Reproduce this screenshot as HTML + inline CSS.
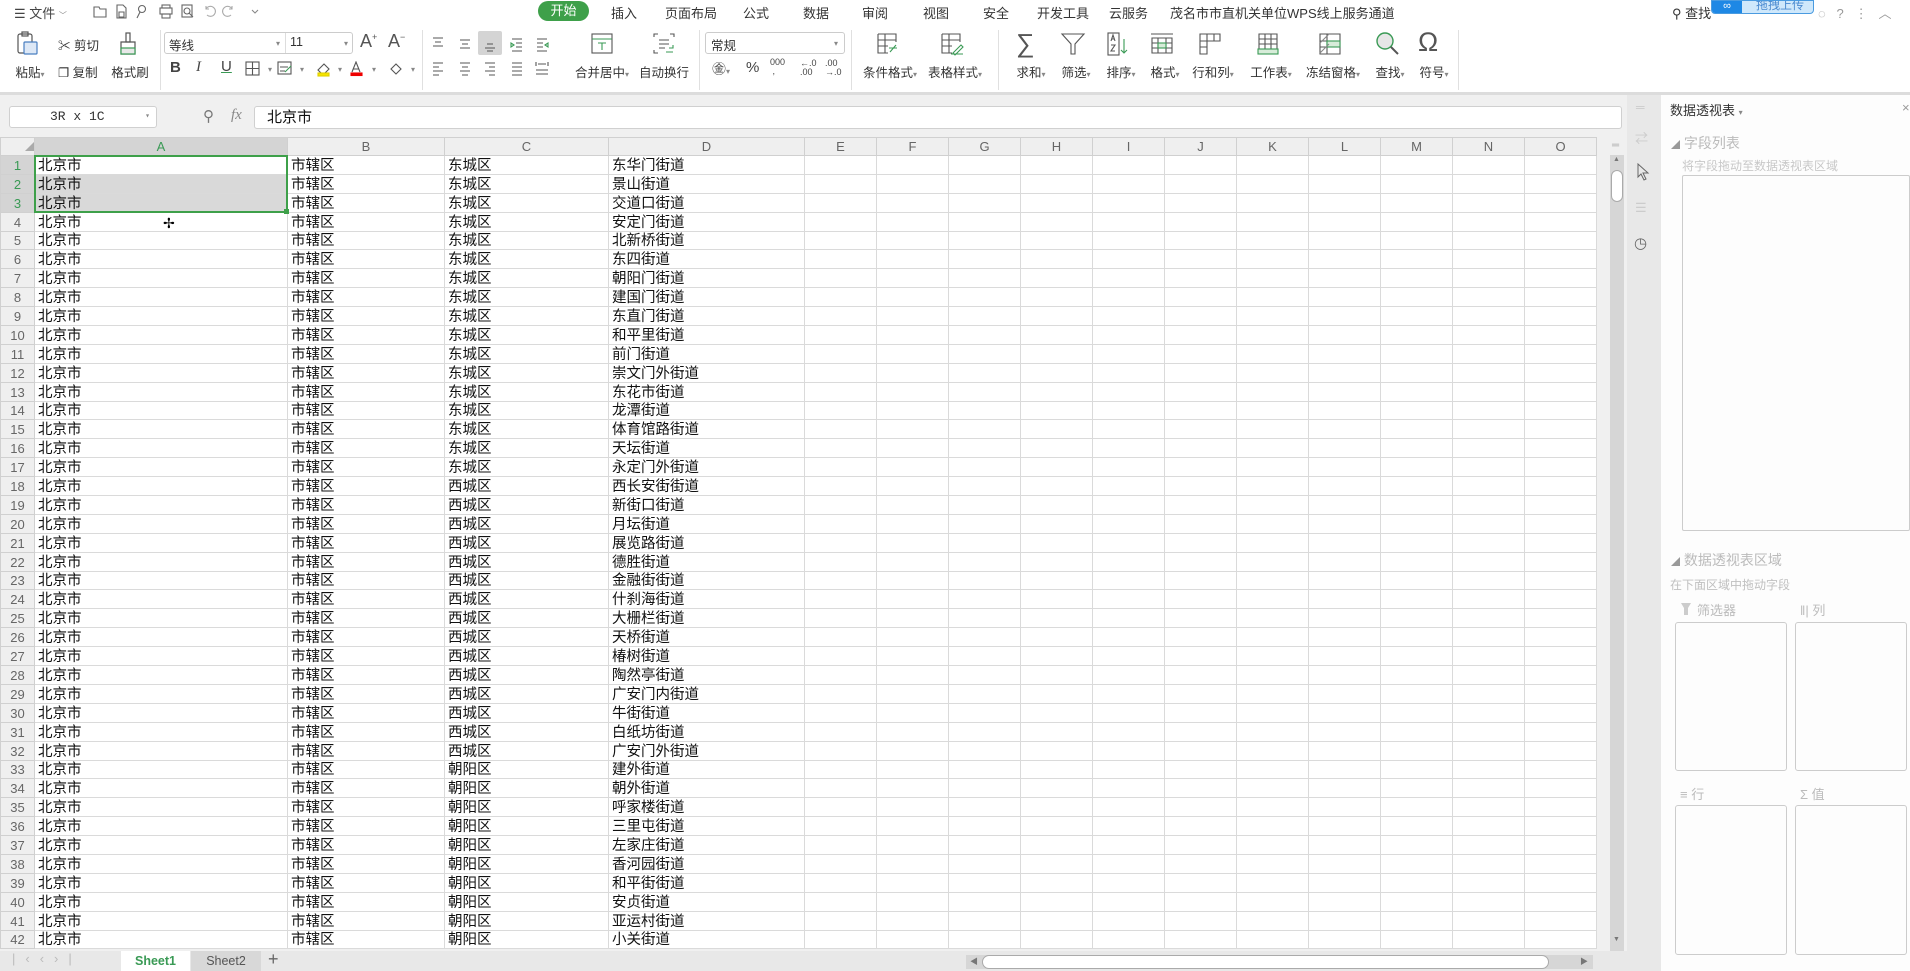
<!DOCTYPE html>
<html><head><meta charset="utf-8">
<style>
*{box-sizing:border-box;margin:0;padding:0}
body{width:1910px;height:971px;overflow:hidden;position:relative;background:#f0f0f0;font-family:"Liberation Sans","Noto Sans CJK SC",sans-serif;color:#333;font-size:13px}
.a{position:absolute}
.tab{position:absolute;top:3px;font-size:13px;color:#333;white-space:nowrap}
.lbl{position:absolute;top:62px;font-size:12.5px;color:#333;white-space:nowrap;transform:translateX(-50%)}
.ic{position:absolute;top:31px;width:26px;height:26px;transform:translateX(-50%)}
.div{position:absolute;top:30px;width:1px;height:60px;background:#e0e0e0}
.dd{font-size:8px;color:#888}
table{border-collapse:collapse;table-layout:fixed;position:absolute;left:0;top:137px}
tr{height:18.9px}
td{border:1px solid #dadada;height:18.9px;padding:0 0 0 3px;font-size:14.5px;line-height:16px;white-space:nowrap;overflow:hidden;color:#111;background:#fff;vertical-align:bottom}
td.r{background:#efefef;color:#666;text-align:center;padding:0;font-size:13px;border-color:#d0d0d0}
tr.h{height:18px}
tr.h td{background:#efefef;color:#666;text-align:center;padding:0;font-size:13px;height:18px;border-color:#d0d0d0;vertical-align:middle}
.pt{font-size:13px;color:#bbb}
</style></head><body>
<div class="a" style="left:0;top:0;width:1910px;height:93px;background:#fff"></div>
<div class="tab" style="left:14px;color:#444">☰ 文件 <span class="dd">﹀</span></div>
<svg class="a" style="left:92px;top:3px" width="190" height="16" fill="none" stroke="#666" stroke-width="1.1">
<path d="M2 4h5l1 2h6v8H2z"/><path d="M25 2h6l3 3v10h-9z M27 9h5v5h-5z"/><circle cx="50" cy="6" r="3.5"/><path d="M48 9l-3 6"/>
<rect x="68" y="5" width="12" height="6"/><rect x="70" y="2" width="8" height="3"/><rect x="70" y="11" width="8" height="4"/>
<rect x="90" y="2" width="10" height="12"/><circle cx="95" cy="8" r="3"/><path d="M97 10l4 4"/>
<path d="M114 6a5 5 0 1 1 1 6M114 3v3h3" stroke="#aaa"/><path d="M140 6a5 5 0 1 0 -1 6M140 3v3h-3" stroke="#aaa"/><path d="M160 7l3 3 3-3" stroke="#888"/></svg>
<div class="a" style="left:538px;top:1px;width:51px;height:20px;border-radius:10px;background:#3ea04a;color:#fff;text-align:center;line-height:20px;font-size:13px">开始</div>
<div class="tab" style="left:611px">插入</div>
<div class="tab" style="left:665px">页面布局</div>
<div class="tab" style="left:743px">公式</div>
<div class="tab" style="left:803px">数据</div>
<div class="tab" style="left:862px">审阅</div>
<div class="tab" style="left:923px">视图</div>
<div class="tab" style="left:983px">安全</div>
<div class="tab" style="left:1037px">开发工具</div>
<div class="tab" style="left:1109px">云服务</div>
<div class="tab" style="left:1170px">茂名市市直机关单位WPS线上服务通道</div>
<div class="tab" style="left:1672px">⚲ 查找</div>
<div class="a" style="left:1711px;top:0;width:103px;height:14px;border-radius:0 0 4px 4px;background:#cfe8fb;border:1px solid #4a9be0;overflow:hidden"><div style="position:absolute;left:0;top:0;width:30px;height:14px;background:#1e88e5;color:#fff;font-size:11px;text-align:center;line-height:10px">∞</div><div style="position:absolute;left:44px;top:-5px;font-size:12px;color:#4a8ad0">拖拽上传</div></div>
<div class="tab" style="left:1818px;color:#999">◌&nbsp;&nbsp; ?&nbsp;&nbsp; ⋮&nbsp;&nbsp; ︿</div>

<div class="div" style="left:160px"></div><div class="div" style="left:422px"></div><div class="div" style="left:699px"></div><div class="div" style="left:851px"></div><div class="div" style="left:998px"></div><div class="div" style="left:1458px"></div>
<svg class="ic" style="left:27px" viewBox="0 0 26 26" fill="none" stroke="#555" stroke-width="1.2"><rect x="4" y="3" width="14" height="19" rx="2"/><rect x="8" y="1" width="6" height="4"/><rect x="10" y="11" width="13" height="12" rx="1" fill="#dde8f6" stroke="#4a7fc0"/></svg>
<div class="lbl" style="left:30px">粘贴<span class="dd">▾</span></div>
<div class="a" style="left:58px;top:35px;font-size:12.5px">✂ 剪切</div>
<div class="a" style="left:58px;top:62px;font-size:12.5px">❐ 复制</div>
<svg class="ic" style="left:128px" viewBox="0 0 26 26" fill="none" stroke="#555" stroke-width="1.2"><rect x="11" y="2" width="4" height="9"/><path d="M6 11h14v12H6z"/><rect x="6" y="17" width="14" height="6" fill="#e8e8e8" stroke="#3a9a55"/></svg>
<div class="lbl" style="left:130px">格式刷</div>
<div class="a" style="left:164px;top:32px;width:189px;height:22px;border:1px solid #ccc;border-radius:3px"></div>
<div class="a" style="left:285px;top:33px;width:1px;height:20px;background:#ddd"></div>
<div class="a" style="left:169px;top:35px;font-size:12.5px">等线</div><div class="a dd" style="left:276px;top:39px">▾</div>
<div class="a" style="left:290px;top:35px;font-size:12.5px">11</div><div class="a dd" style="left:344px;top:39px">▾</div>
<div class="a" style="left:360px;top:31px;font-size:18px;color:#555">A<sup style="font-size:9px">+</sup></div>
<div class="a" style="left:388px;top:31px;font-size:18px;color:#555">A<sup style="font-size:9px">−</sup></div>
<div class="a" style="left:170px;top:59px;font-size:15px;font-weight:bold;color:#444">B</div>
<div class="a" style="left:196px;top:59px;font-size:15px;font-style:italic;color:#444;font-family:'Liberation Serif'">I</div>
<div class="a" style="left:221px;top:58px;font-size:15px;color:#444;text-decoration:underline;text-decoration-color:#3a9a55">U</div>
<svg class="a" style="left:245px;top:61px" width="170" height="16" fill="none" stroke="#555" stroke-width="1.1"><rect x="1" y="1" width="13" height="13"/><path d="M7.5 1v13M1 7.5h13"/><rect x="33" y="1" width="13" height="12"/><path d="M35 6h8M35 10h5"/><path d="M40 11l6-6" stroke="#3a9a55"/><path d="M73 9l6-6 5 5-6 6z"/><rect x="73" y="12" width="11" height="3" fill="#f5e400" stroke="#e0d000"/><path d="M107 11l4-10 4 10M108 8h6"/><rect x="106" y="12" width="11" height="2.5" fill="#e00" stroke="#e00"/><path d="M146 8l5-5 5 5-5 5z"/></svg>
<div class="a dd" style="left:268px;top:65px">▾</div><div class="a dd" style="left:300px;top:65px">▾</div><div class="a dd" style="left:338px;top:65px">▾</div><div class="a dd" style="left:372px;top:65px">▾</div><div class="a dd" style="left:411px;top:65px">▾</div>
<div class="a" style="left:478px;top:31px;width:24px;height:24px;background:#d4d4d4;border-radius:2px"></div>
<svg class="a" style="left:430px;top:36px" width="125" height="42" fill="none" stroke="#555" stroke-width="1.1"><path d="M3 2h10M5 6h6M3 10h10"/><path d="M30 4h10M32 8h6M30 12h10"/><path d="M57 8h6M55 12h10M57 15h6"/><path d="M82 3h10M86 7h6M86 11h6M82 15h10"/><path d="M84 9l-3-2v4z" stroke="#3a9a55"/><path d="M107 3h10M107 7h6M107 11h6M107 15h10"/><path d="M115 9l3-2v4z" stroke="#3a9a55"/>
<path d="M3 27h10M3 31h6M3 35h10M3 39h6"/><path d="M30 27h10M32 31h6M30 35h10M32 39h6"/><path d="M55 27h10M59 31h6M55 35h10M59 39h6"/><path d="M82 27h10M82 31h10M82 35h10M82 39h10"/><path d="M106 26v4M118 26v4M108 28h8M106 34h12M106 38h12"/></svg>
<svg class="ic" style="left:602px" viewBox="0 0 26 26" fill="none" stroke="#555" stroke-width="1.1"><rect x="3" y="3" width="20" height="19"/><path d="M3 8h20" stroke="#3a9a55"/><path d="M9 12h8M13 12v7" stroke="#3a9a55"/></svg>
<div class="lbl" style="left:602px">合并居中<span class="dd">▾</span></div>
<svg class="ic" style="left:664px" viewBox="0 0 26 26" fill="none" stroke="#555" stroke-width="1.1"><path d="M3 6V3h4M19 3h4v3M3 19v3h4M8 9h10M8 13h10M8 17h6"/><path d="M18 17h4v-3M15 21h7" stroke="#3a9a55"/></svg>
<div class="lbl" style="left:664px">自动换行</div>
<div class="a" style="left:705px;top:32px;width:140px;height:22px;border:1px solid #ccc;border-radius:3px"></div>
<div class="a" style="left:711px;top:35px;font-size:12.5px">常规</div><div class="a dd" style="left:834px;top:39px">▾</div>
<div class="a" style="left:712px;top:59px;font-size:14px;color:#444">㊎<span class="dd">▾</span></div>
<div class="a" style="left:746px;top:59px;font-size:15px;color:#444">%</div>
<div class="a" style="left:770px;top:58px;font-size:9px;line-height:9px;color:#444">000<br>&nbsp;,</div>
<div class="a" style="left:800px;top:59px;font-size:9px;line-height:9px;color:#444">←.0<br>.00</div>
<div class="a" style="left:825px;top:59px;font-size:9px;line-height:9px;color:#444">.00<br>→.0</div>
<svg class="ic" style="left:888px" viewBox="0 0 26 26" fill="none" stroke="#555" stroke-width="1.1"><path d="M3 3h18v8M3 3v19h10M3 9h18M3 15h10M10 3v19"/><path d="M15 21l6-7M14 17h8" stroke="#3a9a55"/></svg>
<div class="lbl" style="left:890px">条件格式<span class="dd">▾</span></div>
<svg class="ic" style="left:952px" viewBox="0 0 26 26" fill="none" stroke="#555" stroke-width="1.1"><path d="M3 3h18v8M3 3v19h10M3 9h18M3 15h10M10 3v19"/><path d="M14 22l8-8 2 2-8 8zM12 23h12" stroke="#3a9a55"/></svg>
<div class="lbl" style="left:955px">表格样式<span class="dd">▾</span></div>
<div class="a" style="left:1016px;top:28px;font-size:26px;color:#555;line-height:30px">∑</div>
<div class="lbl" style="left:1031px">求和<span class="dd">▾</span></div>
<svg class="ic" style="left:1073px" viewBox="0 0 26 26" fill="none" stroke="#555" stroke-width="1.1"><path d="M2 3h22l-9 10v10h-4V13z"/></svg>
<div class="lbl" style="left:1076px">筛选<span class="dd">▾</span></div>
<svg class="ic" style="left:1118px" viewBox="0 0 26 26" fill="none" stroke="#555" stroke-width="1.1"><rect x="3" y="2" width="11" height="22"/><path d="M6 10l2-6 2 6M6.5 8h3M6 14h4l-4 6h4"/><path d="M19 8v14M16 19l3 3 3-3" stroke="#3a9a55"/></svg>
<div class="lbl" style="left:1121px">排序<span class="dd">▾</span></div>
<svg class="ic" style="left:1162px" viewBox="0 0 26 26" fill="none" stroke="#555" stroke-width="1.1"><path d="M2 3h22M3 7h20v15H3zM3 12h20M3 17h20M9 7v15M17 7v15"/><rect x="9" y="12" width="8" height="5" fill="#d7ecd9" stroke="#3a9a55"/></svg>
<div class="lbl" style="left:1165px">格式<span class="dd">▾</span></div>
<svg class="ic" style="left:1210px" viewBox="0 0 26 26" fill="none" stroke="#555" stroke-width="1.1"><path d="M3 3h20v7H10v13H3zM10 3v7M17 3v7M3 10h7M3 16h7"/></svg>
<div class="lbl" style="left:1213px">行和列<span class="dd">▾</span></div>
<svg class="ic" style="left:1268px" viewBox="0 0 26 26" fill="none" stroke="#555" stroke-width="1.1"><path d="M4 3h18v15H4zM4 8h18M4 13h18M10 3v15M16 3v15"/><rect x="3" y="18" width="20" height="5" fill="#d7ecd9" stroke="#3a9a55"/></svg>
<div class="lbl" style="left:1271px">工作表<span class="dd">▾</span></div>
<svg class="ic" style="left:1330px" viewBox="0 0 26 26" fill="none" stroke="#555" stroke-width="1.1"><path d="M3 3h20v20H3zM3 10h20M3 16h20M10 3v20"/><rect x="10" y="10" width="13" height="6" fill="#d7ecd9" stroke="#3a9a55"/><path d="M3 12l9-9M3 22l9-9" stroke="#888"/></svg>
<div class="lbl" style="left:1333px">冻结窗格<span class="dd">▾</span></div>
<svg class="ic" style="left:1387px" viewBox="0 0 26 26" fill="none" stroke-width="1.4"><circle cx="11" cy="10" r="8" fill="#e6e6e6" stroke="#3a9a55"/><path d="M17 16l7 7" stroke="#555" stroke-width="2"/></svg>
<div class="lbl" style="left:1390px">查找<span class="dd">▾</span></div>
<div class="a" style="left:1418px;top:27px;font-size:27px;color:#555;line-height:30px">Ω</div>
<div class="lbl" style="left:1434px">符号<span class="dd">▾</span></div>
<div class="a" style="left:0;top:92px;width:1910px;height:3px;background:#dcdcdc"></div>

<div class="a" style="left:9px;top:106px;width:148px;height:22px;background:#fff;border:1px solid #d0d0d0;border-radius:3px;font-size:13px;line-height:20px;padding-left:40px;color:#333;font-family:'Liberation Mono',monospace">3R x 1C<span class="dd" style="position:absolute;right:6px">▾</span></div>
<div class="a" style="left:203px;top:107px;font-size:15px;color:#777">⚲</div>
<div class="a" style="left:231px;top:107px;font-size:15px;color:#888;font-style:italic;font-family:'Liberation Serif'">fx</div>
<div class="a" style="left:254px;top:106px;width:1368px;height:23px;background:#fff;border:1px solid #d0d0d0;border-radius:3px;font-size:15px;line-height:21px;padding-left:12px;color:#111">北京市</div>

<table>
<colgroup><col style="width:34px"><col style="width:253px"><col style="width:157px"><col style="width:164px"><col style="width:196px"><col style="width:72px"><col style="width:72px"><col style="width:72px"><col style="width:72px"><col style="width:72px"><col style="width:72px"><col style="width:72px"><col style="width:72px"><col style="width:72px"><col style="width:72px"><col style="width:72px"></colgroup>
<tr class="h"><td style="color:#aaa;text-align:right;font-size:9px">◢</td><td style="background:#d4d4d4;color:#3a9a55">A</td><td>B</td><td>C</td><td>D</td><td>E</td><td>F</td><td>G</td><td>H</td><td>I</td><td>J</td><td>K</td><td>L</td><td>M</td><td>N</td><td>O</td></tr>
<tr><td class="r" style="color:#3a9a55;background:#d4d4d4">1</td><td>北京市</td><td>市辖区</td><td>东城区</td><td>东华门街道</td><td></td><td></td><td></td><td></td><td></td><td></td><td></td><td></td><td></td><td></td><td></td></tr>
<tr><td class="r" style="color:#3a9a55;background:#d4d4d4">2</td><td style="background:#d9d9d9">北京市</td><td>市辖区</td><td>东城区</td><td>景山街道</td><td></td><td></td><td></td><td></td><td></td><td></td><td></td><td></td><td></td><td></td><td></td></tr>
<tr><td class="r" style="color:#3a9a55;background:#d4d4d4">3</td><td style="background:#d9d9d9">北京市</td><td>市辖区</td><td>东城区</td><td>交道口街道</td><td></td><td></td><td></td><td></td><td></td><td></td><td></td><td></td><td></td><td></td><td></td></tr>
<tr><td class="r">4</td><td>北京市</td><td>市辖区</td><td>东城区</td><td>安定门街道</td><td></td><td></td><td></td><td></td><td></td><td></td><td></td><td></td><td></td><td></td><td></td></tr>
<tr><td class="r">5</td><td>北京市</td><td>市辖区</td><td>东城区</td><td>北新桥街道</td><td></td><td></td><td></td><td></td><td></td><td></td><td></td><td></td><td></td><td></td><td></td></tr>
<tr><td class="r">6</td><td>北京市</td><td>市辖区</td><td>东城区</td><td>东四街道</td><td></td><td></td><td></td><td></td><td></td><td></td><td></td><td></td><td></td><td></td><td></td></tr>
<tr><td class="r">7</td><td>北京市</td><td>市辖区</td><td>东城区</td><td>朝阳门街道</td><td></td><td></td><td></td><td></td><td></td><td></td><td></td><td></td><td></td><td></td><td></td></tr>
<tr><td class="r">8</td><td>北京市</td><td>市辖区</td><td>东城区</td><td>建国门街道</td><td></td><td></td><td></td><td></td><td></td><td></td><td></td><td></td><td></td><td></td><td></td></tr>
<tr><td class="r">9</td><td>北京市</td><td>市辖区</td><td>东城区</td><td>东直门街道</td><td></td><td></td><td></td><td></td><td></td><td></td><td></td><td></td><td></td><td></td><td></td></tr>
<tr><td class="r">10</td><td>北京市</td><td>市辖区</td><td>东城区</td><td>和平里街道</td><td></td><td></td><td></td><td></td><td></td><td></td><td></td><td></td><td></td><td></td><td></td></tr>
<tr><td class="r">11</td><td>北京市</td><td>市辖区</td><td>东城区</td><td>前门街道</td><td></td><td></td><td></td><td></td><td></td><td></td><td></td><td></td><td></td><td></td><td></td></tr>
<tr><td class="r">12</td><td>北京市</td><td>市辖区</td><td>东城区</td><td>崇文门外街道</td><td></td><td></td><td></td><td></td><td></td><td></td><td></td><td></td><td></td><td></td><td></td></tr>
<tr><td class="r">13</td><td>北京市</td><td>市辖区</td><td>东城区</td><td>东花市街道</td><td></td><td></td><td></td><td></td><td></td><td></td><td></td><td></td><td></td><td></td><td></td></tr>
<tr><td class="r">14</td><td>北京市</td><td>市辖区</td><td>东城区</td><td>龙潭街道</td><td></td><td></td><td></td><td></td><td></td><td></td><td></td><td></td><td></td><td></td><td></td></tr>
<tr><td class="r">15</td><td>北京市</td><td>市辖区</td><td>东城区</td><td>体育馆路街道</td><td></td><td></td><td></td><td></td><td></td><td></td><td></td><td></td><td></td><td></td><td></td></tr>
<tr><td class="r">16</td><td>北京市</td><td>市辖区</td><td>东城区</td><td>天坛街道</td><td></td><td></td><td></td><td></td><td></td><td></td><td></td><td></td><td></td><td></td><td></td></tr>
<tr><td class="r">17</td><td>北京市</td><td>市辖区</td><td>东城区</td><td>永定门外街道</td><td></td><td></td><td></td><td></td><td></td><td></td><td></td><td></td><td></td><td></td><td></td></tr>
<tr><td class="r">18</td><td>北京市</td><td>市辖区</td><td>西城区</td><td>西长安街街道</td><td></td><td></td><td></td><td></td><td></td><td></td><td></td><td></td><td></td><td></td><td></td></tr>
<tr><td class="r">19</td><td>北京市</td><td>市辖区</td><td>西城区</td><td>新街口街道</td><td></td><td></td><td></td><td></td><td></td><td></td><td></td><td></td><td></td><td></td><td></td></tr>
<tr><td class="r">20</td><td>北京市</td><td>市辖区</td><td>西城区</td><td>月坛街道</td><td></td><td></td><td></td><td></td><td></td><td></td><td></td><td></td><td></td><td></td><td></td></tr>
<tr><td class="r">21</td><td>北京市</td><td>市辖区</td><td>西城区</td><td>展览路街道</td><td></td><td></td><td></td><td></td><td></td><td></td><td></td><td></td><td></td><td></td><td></td></tr>
<tr><td class="r">22</td><td>北京市</td><td>市辖区</td><td>西城区</td><td>德胜街道</td><td></td><td></td><td></td><td></td><td></td><td></td><td></td><td></td><td></td><td></td><td></td></tr>
<tr><td class="r">23</td><td>北京市</td><td>市辖区</td><td>西城区</td><td>金融街街道</td><td></td><td></td><td></td><td></td><td></td><td></td><td></td><td></td><td></td><td></td><td></td></tr>
<tr><td class="r">24</td><td>北京市</td><td>市辖区</td><td>西城区</td><td>什刹海街道</td><td></td><td></td><td></td><td></td><td></td><td></td><td></td><td></td><td></td><td></td><td></td></tr>
<tr><td class="r">25</td><td>北京市</td><td>市辖区</td><td>西城区</td><td>大栅栏街道</td><td></td><td></td><td></td><td></td><td></td><td></td><td></td><td></td><td></td><td></td><td></td></tr>
<tr><td class="r">26</td><td>北京市</td><td>市辖区</td><td>西城区</td><td>天桥街道</td><td></td><td></td><td></td><td></td><td></td><td></td><td></td><td></td><td></td><td></td><td></td></tr>
<tr><td class="r">27</td><td>北京市</td><td>市辖区</td><td>西城区</td><td>椿树街道</td><td></td><td></td><td></td><td></td><td></td><td></td><td></td><td></td><td></td><td></td><td></td></tr>
<tr><td class="r">28</td><td>北京市</td><td>市辖区</td><td>西城区</td><td>陶然亭街道</td><td></td><td></td><td></td><td></td><td></td><td></td><td></td><td></td><td></td><td></td><td></td></tr>
<tr><td class="r">29</td><td>北京市</td><td>市辖区</td><td>西城区</td><td>广安门内街道</td><td></td><td></td><td></td><td></td><td></td><td></td><td></td><td></td><td></td><td></td><td></td></tr>
<tr><td class="r">30</td><td>北京市</td><td>市辖区</td><td>西城区</td><td>牛街街道</td><td></td><td></td><td></td><td></td><td></td><td></td><td></td><td></td><td></td><td></td><td></td></tr>
<tr><td class="r">31</td><td>北京市</td><td>市辖区</td><td>西城区</td><td>白纸坊街道</td><td></td><td></td><td></td><td></td><td></td><td></td><td></td><td></td><td></td><td></td><td></td></tr>
<tr><td class="r">32</td><td>北京市</td><td>市辖区</td><td>西城区</td><td>广安门外街道</td><td></td><td></td><td></td><td></td><td></td><td></td><td></td><td></td><td></td><td></td><td></td></tr>
<tr><td class="r">33</td><td>北京市</td><td>市辖区</td><td>朝阳区</td><td>建外街道</td><td></td><td></td><td></td><td></td><td></td><td></td><td></td><td></td><td></td><td></td><td></td></tr>
<tr><td class="r">34</td><td>北京市</td><td>市辖区</td><td>朝阳区</td><td>朝外街道</td><td></td><td></td><td></td><td></td><td></td><td></td><td></td><td></td><td></td><td></td><td></td></tr>
<tr><td class="r">35</td><td>北京市</td><td>市辖区</td><td>朝阳区</td><td>呼家楼街道</td><td></td><td></td><td></td><td></td><td></td><td></td><td></td><td></td><td></td><td></td><td></td></tr>
<tr><td class="r">36</td><td>北京市</td><td>市辖区</td><td>朝阳区</td><td>三里屯街道</td><td></td><td></td><td></td><td></td><td></td><td></td><td></td><td></td><td></td><td></td><td></td></tr>
<tr><td class="r">37</td><td>北京市</td><td>市辖区</td><td>朝阳区</td><td>左家庄街道</td><td></td><td></td><td></td><td></td><td></td><td></td><td></td><td></td><td></td><td></td><td></td></tr>
<tr><td class="r">38</td><td>北京市</td><td>市辖区</td><td>朝阳区</td><td>香河园街道</td><td></td><td></td><td></td><td></td><td></td><td></td><td></td><td></td><td></td><td></td><td></td></tr>
<tr><td class="r">39</td><td>北京市</td><td>市辖区</td><td>朝阳区</td><td>和平街街道</td><td></td><td></td><td></td><td></td><td></td><td></td><td></td><td></td><td></td><td></td><td></td></tr>
<tr><td class="r">40</td><td>北京市</td><td>市辖区</td><td>朝阳区</td><td>安贞街道</td><td></td><td></td><td></td><td></td><td></td><td></td><td></td><td></td><td></td><td></td><td></td></tr>
<tr><td class="r">41</td><td>北京市</td><td>市辖区</td><td>朝阳区</td><td>亚运村街道</td><td></td><td></td><td></td><td></td><td></td><td></td><td></td><td></td><td></td><td></td><td></td></tr>
<tr><td class="r">42</td><td>北京市</td><td>市辖区</td><td>朝阳区</td><td>小关街道</td><td></td><td></td><td></td><td></td><td></td><td></td><td></td><td></td><td></td><td></td><td></td></tr>
</table>
<div class="a" style="left:34px;top:155px;width:254px;height:58px;border:2px solid #3ea04a"></div>
<div class="a" style="left:284px;top:209px;width:5px;height:5px;background:#3ea04a"></div>
<div class="a" style="left:163px;top:215px;font-size:14px;color:#000">✢</div>

<div class="a" style="left:1597px;top:137px;width:30px;height:816px;background:#f0f0f0"></div>
<div class="a" style="left:1610px;top:155px;width:14px;height:796px;background:#d6d6d6"></div>
<div class="a" style="left:1611px;top:170px;width:12px;height:32px;background:#fff;border:1px solid #aaa;border-radius:6px"></div>
<div class="a" style="left:1613px;top:156px;font-size:7px;color:#777">▲</div>
<div class="a" style="left:1613px;top:936px;font-size:7px;color:#777">▼</div>
<div class="a" style="left:1612px;top:140px;font-size:10px;color:#aaa">═</div>
<div class="a" style="left:0;top:951px;width:1627px;height:20px;background:#e8e8e8"></div>
<div class="a" style="left:12px;top:951px;font-size:13px;color:#bbb;letter-spacing:10px">|‹‹›|</div>
<div class="a" style="left:121px;top:951px;width:69px;height:20px;background:#fff;color:#3a9a55;font-weight:bold;font-size:12.5px;text-align:center;line-height:20px">Sheet1</div>
<div class="a" style="left:191px;top:951px;width:70px;height:20px;background:#d8d8d8;color:#555;font-size:12.5px;text-align:center;line-height:20px">Sheet2</div>
<div class="a" style="left:268px;top:949px;font-size:18px;color:#666">+</div>
<div class="a" style="left:966px;top:955px;width:627px;height:14px;background:#d6d6d6"></div>
<div class="a" style="left:982px;top:955px;width:567px;height:14px;background:#fff;border:1px solid #aaa;border-radius:7px"></div>
<div class="a" style="left:970px;top:956px;font-size:8px;color:#777">◀</div>
<div class="a" style="left:1580px;top:956px;font-size:8px;color:#777">▶</div>
<div class="a" style="left:1627px;top:95px;width:34px;height:876px;background:#e8e8e8"></div>
<div class="a" style="left:1636px;top:100px;font-size:12px;color:#ccc">═</div>
<div class="a" style="left:1635px;top:128px;font-size:13px;color:#ccc">⇄</div>
<svg class="a" style="left:1636px;top:163px" width="16" height="18" fill="none" stroke="#666"><path d="M2 1v13l3-3 3 6 2-1-3-6h5z"/></svg>
<div class="a" style="left:1635px;top:200px;font-size:13px;color:#ccc">☰</div>
<div class="a" style="left:1634px;top:234px;font-size:15px;color:#666">◷</div>
<div class="a" style="left:1661px;top:95px;width:249px;height:876px;background:#fdfdfd"></div>
<div class="a" style="left:1670px;top:100px;font-size:13px;color:#333">数据透视表 <span class="dd">▾</span></div>
<div class="a" style="left:1902px;top:100px;font-size:13px;color:#999">×</div>
<div class="a" style="left:1671px;top:133px;font-size:14px;color:#bbb"><span style="font-size:9px;color:#999">◢</span> 字段列表</div>
<div class="a" style="left:1682px;top:157px;font-size:12px;color:#c8c8c8">将字段拖动至数据透视表区域</div>
<div class="a" style="left:1682px;top:175px;width:228px;height:356px;border:1px solid #ccc;border-radius:2px;background:#fdfdfd"></div>
<div class="a" style="left:1671px;top:550px;font-size:14px;color:#bbb"><span style="font-size:9px;color:#999">◢</span> 数据透视表区域</div>
<div class="a" style="left:1670px;top:576px;font-size:12px;color:#c0c0c0">在下面区域中拖动字段</div>
<svg class="a" style="left:1680px;top:602px" width="12" height="14" fill="#ccc"><path d="M1 1h10l-3 5v7H4V6z"/></svg>
<div class="a pt" style="left:1697px;top:600px">筛选器</div>
<div class="a pt" style="left:1800px;top:600px">‖| 列</div>
<div class="a" style="left:1675px;top:622px;width:112px;height:149px;border:1px solid #ccc;border-radius:3px"></div>
<div class="a" style="left:1795px;top:622px;width:112px;height:149px;border:1px solid #ccc;border-radius:3px"></div>
<div class="a pt" style="left:1680px;top:784px">≡ 行</div>
<div class="a pt" style="left:1800px;top:784px">Σ 值</div>
<div class="a" style="left:1675px;top:805px;width:112px;height:150px;border:1px solid #ccc;border-radius:3px"></div>
<div class="a" style="left:1795px;top:805px;width:112px;height:150px;border:1px solid #ccc;border-radius:3px"></div>
</body></html>
